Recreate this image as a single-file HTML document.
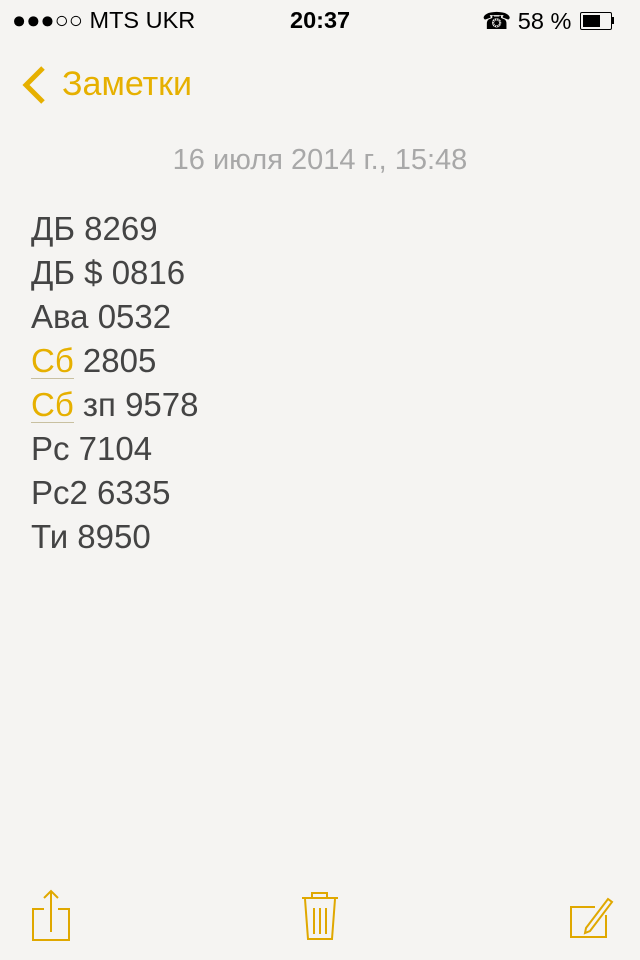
<!DOCTYPE html>
<html><head><meta charset="utf-8"><style>
body{margin:0;width:640px;height:960px;background:#f5f4f2;font-family:"Liberation Sans","DejaVu Sans",sans-serif;position:relative;overflow:hidden}
.a{position:absolute;white-space:nowrap}
.y{color:#e6b000}
.note{position:absolute;left:31px;top:207px;font-size:33px;line-height:44px;color:#444}
.u{color:#e6b000;border-bottom:1px solid #c8c0a0;display:inline-block;line-height:34px}
</style></head><body>
<div class="a" style="left:12px;top:7px;font-size:23.5px;color:#000">●●●○○ MTS UKR</div>
<div class="a" style="left:290px;top:7px;font-size:23.5px;font-weight:bold;color:#000">20:37</div>
<div class="a" style="left:482px;top:7px;font-size:23.5px;color:#000">☎ 58 %</div>
<div class="a" style="left:580px;top:12px;width:30px;height:16px;border:1.5px solid #000;border-radius:2px"><div style="margin:2px;width:17px;height:12px;background:#000"></div></div>
<div class="a" style="left:612px;top:17px;width:2px;height:7px;background:#000"></div>
<svg class="a" style="left:18px;top:64px" width="30" height="42"><path d="M25 4 L8 21 L25 38" fill="none" stroke="#e6b000" stroke-width="5"/></svg>
<div class="a y" style="left:62px;top:65px;font-size:34px">Заметки</div>
<div class="a" style="left:0;width:640px;text-align:center;top:144px;font-size:29px;color:#a8a8a8">16 июля 2014 г., 15:48</div>
<div class="note">ДБ 8269<br>ДБ $ 0816<br>Ава 0532<br><span class="u">Сб</span> 2805<br><span class="u">Сб</span> зп 9578<br>Рс 7104<br>Рс2 6335<br>Ти 8950</div>
<svg class="a" style="left:0;top:0" width="640" height="960" fill="none" stroke="#e0a800" stroke-width="2">
<path d="M44 909 H33 V940 H69 V909 H58"/><path d="M51 891 V932"/><path d="M44 898 L51 891 L58 898"/>
<path d="M302 898 H338"/><path d="M312 898 V893 H327 V898"/><path d="M305 899 L308 939 H332 L335 899"/><path d="M314 908 V934 M320 908 V934 M326 908 V934"/>
<path d="M595 907 H571 V937 H606 V915"/><path d="M586 928 L608 899 L612 902 L590 931 L585 933 Z"/>
</svg>
</body></html>
